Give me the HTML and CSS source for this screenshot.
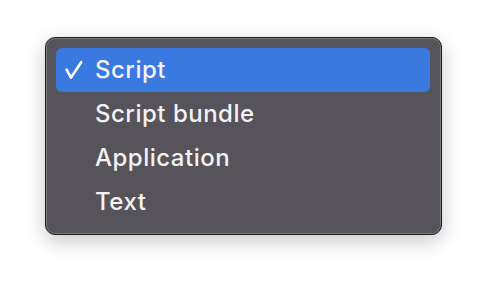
FILE: index.html
```html
<!DOCTYPE html>
<html lang="en">
<head>
    <meta charset="UTF-8">
    <title>Menu</title>
    <link rel="stylesheet" href="styles.css">
</head>
<body>
    <div class="menu">
        <div class="item selected">
            <span class="check">
                <svg width="20" height="20" viewBox="0 0 20 20"><path d="M2.6 9.6 L7 17.6 L17.2 2.2" fill="none" stroke="#fff" stroke-width="2.6" stroke-linecap="round" stroke-linejoin="round"/></svg>
            </span>
            <span class="label">Script</span>
        </div>
        <div class="item"><span class="check"></span><span class="label">Script bundle</span></div>
        <div class="item"><span class="check"></span><span class="label">Application</span></div>
        <div class="item"><span class="check"></span><span class="label">Text</span></div>
    </div>
</body>
</html>
```

FILE: styles.css
```css
body {
    margin: 0;
    width: 486px;
    height: 288px;
    background: #ffffff;
    font-family: 'Inter', 'Roboto', sans-serif;
}

.menu {
    margin: 37px 0 0 45px;
    width: 374px;
    padding: 10px 11px 10px 10px;
    background: #56545a;
    border: 1px solid #1f1f1f;
    border-radius: 10px;
    box-shadow: inset 0 0 0 1px #7b7a7e, 0 6px 20px rgba(0, 0, 0, 0.22);
    display: flex;
    flex-direction: column;
}

.item {
    height: 44px;
    display: flex;
    align-items: center;
    color: #f2f2f3;
    font-size: 24px;
    font-weight: 500;
    border-radius: 6px;
}

.selected {
    background: #3a7ae0;
}

.check {
    width: 39px;
    display: flex;
    padding-left: 8px;
    box-sizing: border-box;
}

.label {
    letter-spacing: 0.5px;
    margin-top: -1px;
}
```
